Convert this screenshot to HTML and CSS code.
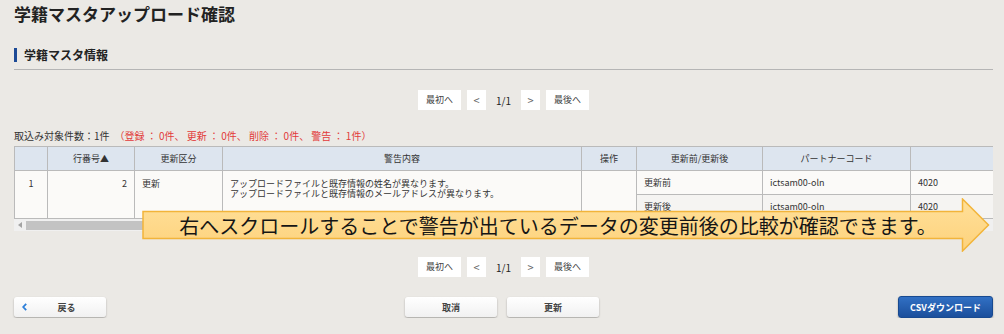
FILE: index.html
```html
<!DOCTYPE html>
<html lang="ja">
<head>
    <meta charset="UTF-8">
    <title>学籍マスタアップロード確認</title>
    <link rel="stylesheet" href="styles.css">
</head>
<body>
    <div class="page">
        <h1 class="page-title">学籍マスタアップロード確認</h1>
        <div class="section-head">
            <h2 class="section-title">学籍マスタ情報</h2>
        </div>

        <div class="pager">
            <span class="pg-btn">最初へ</span>
            <span class="pg-btn pg-arrow">&lt;</span>
            <span class="pg-num">1/1</span>
            <span class="pg-btn pg-arrow">&gt;</span>
            <span class="pg-btn">最後へ</span>
        </div>

        <p class="count">取込み対象件数：1件<span class="count-detail">（登録 ： 0件、 更新 ： 0件、 削除 ： 0件、 警告 ： 1件）</span></p>

        <div class="table-area">
            <div class="table-wrap">
                <table class="data-table">
                    <colgroup>
                        <col class="c-no">
                        <col class="c-line">
                        <col class="c-kind">
                        <col class="c-msg">
                        <col class="c-op">
                        <col class="c-ba">
                        <col class="c-partner">
                        <col class="c-code">
                        <col class="c-more">
                        <col class="c-more">
                    </colgroup>
                    <thead>
                        <tr>
                            <th></th>
                            <th>行番号▲</th>
                            <th>更新区分</th>
                            <th>警告内容</th>
                            <th>操作</th>
                            <th>更新前/更新後</th>
                            <th>パートナーコード</th>
                            <th></th>
                            <th></th>
                            <th></th>
                        </tr>
                    </thead>
                    <tbody>
                        <tr>
                            <td rowspan="2" class="cell-top center">1</td>
                            <td rowspan="2" class="cell-top right">2</td>
                            <td rowspan="2" class="cell-top">更新</td>
                            <td rowspan="2" class="cell-top">アップロードファイルと既存情報の姓名が異なります。<br>アップロードファイルと既存情報のメールアドレスが異なります。</td>
                            <td rowspan="2"></td>
                            <td>更新前</td>
                            <td>ictsam00-oln</td>
                            <td>4020</td>
                            <td></td>
                            <td></td>
                        </tr>
                        <tr class="row-after">
                            <td>更新後</td>
                            <td>ictsam00-oln</td>
                            <td>4020</td>
                            <td></td>
                            <td></td>
                        </tr>
                    </tbody>
                </table>
            </div>
            <div class="hscroll">
                <span class="hs-btn"><svg viewBox="0 0 4 6"><path d="M4 0 L0 3 L4 6 Z"/></svg></span>
                <span class="hs-track"><span class="hs-thumb"></span></span>
                <span class="hs-btn"><svg viewBox="0 0 4 6"><path d="M0 0 L4 3 L0 6 Z"/></svg></span>
            </div>

            <div class="callout">
                <svg class="callout-shape" viewBox="0 0 848 54">
                    <defs>
                        <linearGradient id="calloutFill" x1="0" y1="0" x2="0" y2="1">
                            <stop offset="0" stop-color="#ffe09a"/>
                            <stop offset="1" stop-color="#fdd27c"/>
                        </linearGradient>
                    </defs>
                    <polygon points="1,13.5 820.5,13.5 820.5,1 846.5,27 820.5,53 820.5,40.5 1,40.5" fill="url(#calloutFill)" stroke="#f2b43a" stroke-width="1.5"/>
                </svg>
                <span class="callout-text">右へスクロールすることで警告が出ているデータの変更前後の比較が確認できます。</span>
            </div>
        </div>

        <div class="pager pager-bottom">
            <span class="pg-btn">最初へ</span>
            <span class="pg-btn pg-arrow">&lt;</span>
            <span class="pg-num">1/1</span>
            <span class="pg-btn pg-arrow">&gt;</span>
            <span class="pg-btn">最後へ</span>
        </div>

        <div class="actions">
            <button class="btn btn-back">
                <svg class="chev" viewBox="0 0 5 8"><polyline points="4.2,0.8 1.2,4 4.2,7.2"/></svg>
                <span class="btn-back-label">戻る</span>
            </button>
            <div class="center-group">
                <button class="btn">取消</button>
                <button class="btn">更新</button>
            </div>
            <button class="btn btn-csv">CSVダウンロード</button>
        </div>
    </div>
</body>
</html>
```

FILE: styles.css
```css
html, body {
    margin: 0;
    background-color: #ebe9e5;
    font-family: "Noto Sans CJK JP", "Noto Sans", sans-serif;
    color: #333;
}
.page {
    padding: 0 11px 0 14px;
}
.page-title {
    margin: 0;
    font-size: 17px;
    line-height: 28px;
    font-weight: bold;
    color: #222;
}
.section-head {
    margin-top: 20px;
    padding-bottom: 7px;
    border-bottom: 1px solid #b5b5b5;
}
.section-title {
    margin: 0;
    border-left: 3px solid #1d4a96;
    padding-left: 7px;
    font-size: 12px;
    line-height: 14px;
    font-weight: bold;
    color: #222;
}

/* pager */
.pager {
    display: flex;
    justify-content: center;
    align-items: center;
    gap: 6px;
    margin-top: 20px;
    height: 20px;
}
.pager-bottom {
    margin-top: 26px;
}
.pg-btn {
    height: 20px;
    padding: 0 8px;
    background-color: #fff;
    font-size: 9px;
    line-height: 20px;
    color: #444;
}
.pg-arrow {
    width: 19px;
    padding: 0;
    text-align: center;
    font-size: 11px;
    color: #666;
}
.pg-num {
    padding: 0 4px;
    font-size: 10px;
    color: #222;
}

.count {
    margin: 19px 0 3px;
    font-size: 10px;
    line-height: 14px;
    color: #333;
}
.count-detail {
    margin-left: 5px;
    color: #e23a3a;
}

/* table */
.table-area {
    position: relative;
}
.table-wrap {
    overflow: hidden;
}
.data-table {
    border-collapse: collapse;
    table-layout: fixed;
    width: 1346px;
    font-size: 9px;
    color: #333;
}
.c-no { width: 33px; }
.c-line { width: 87px; }
.c-kind { width: 88px; }
.c-msg { width: 359px; }
.c-op { width: 55px; }
.c-ba { width: 126px; }
.c-partner { width: 148px; }
.c-code { width: 150px; }
.c-more { width: 150px; }
.data-table th,
.data-table td {
    border: 1px solid #bababa;
    padding: 0 7px;
    height: 23px;
    white-space: nowrap;
}
.data-table th {
    background-color: #dde5ef;
    font-weight: normal;
    text-align: center;
}
.data-table td {
    background-color: #fbfaf8;
}
.data-table .row-after td {
    background-color: #f5f4f2;
}
.data-table .cell-top {
    vertical-align: top;
    padding-top: 8px;
    line-height: 10px;
    background-color: #fbfaf8;
}
.center { text-align: center; }
.right { text-align: right; }

.hscroll {
    display: flex;
    height: 12px;
    background-color: #f0f0f0;
}
.hs-btn {
    width: 12px;
    display: flex;
    align-items: center;
    justify-content: center;
}
.hs-btn svg {
    width: 4px;
    height: 6px;
    fill: #a3a3a3;
}
.hs-track {
    flex: 1;
    display: flex;
    align-items: center;
}
.hs-thumb {
    width: 620px;
    height: 9px;
    background-color: #c3c3c3;
}

/* callout arrow over the table */
.callout {
    position: absolute;
    left: 128px;
    top: 52px;
    width: 848px;
    height: 54px;
}
.callout-shape {
    position: absolute;
    left: 0;
    top: 0;
    width: 848px;
    height: 54px;
}
.callout-text {
    position: absolute;
    left: 0;
    top: 13px;
    width: 820px;
    height: 28px;
    padding-left: 12px;
    box-sizing: border-box;
    display: flex;
    align-items: center;
    justify-content: center;
    font-size: 20px;
    font-weight: 400;
    color: #151515;
    white-space: nowrap;
}

/* buttons */
.actions {
    display: grid;
    grid-template-columns: 1fr auto 1fr;
    align-items: center;
    margin-top: 19px;
}
.btn {
    width: 92px;
    height: 20px;
    border: none;
    border-radius: 3px;
    background: linear-gradient(#ffffff, #f1f1f1);
    box-shadow: 0 1px 2px rgba(0, 0, 0, 0.3);
    font-family: "Noto Sans CJK JP", sans-serif;
    font-size: 9px;
    font-weight: bold;
    color: #444;
    padding: 0;
    cursor: pointer;
}
.btn-back {
    justify-self: start;
    display: flex;
    align-items: center;
    padding-left: 8px;
}
.chev {
    width: 5px;
    height: 8px;
    fill: none;
    stroke: #2d7fd9;
    stroke-width: 1.8;
}
.btn-back-label {
    flex: 1;
    text-align: center;
}
.center-group {
    display: flex;
    gap: 10px;
    margin-right: 3px;
}
.btn-csv {
    justify-self: end;
    width: 95px;
    height: 22px;
    border: 1px solid #184a90;
    background: linear-gradient(#3170c4, #1b4f9c);
    color: #fff;
}
```
